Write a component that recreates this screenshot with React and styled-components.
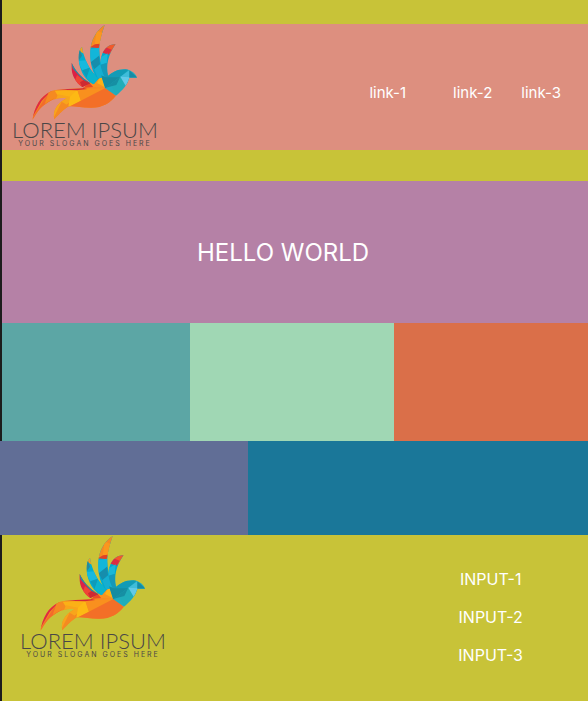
import React from "react";
import styled, { createGlobalStyle } from "styled-components";

const GlobalStyle = createGlobalStyle`
  *, *::before, *::after { box-sizing: border-box; }
  body {
    margin: 0;
    background: #c8c338;
    font-family: Inter, "Liberation Sans", sans-serif;
    color: #fff;
  }
`;

const Page = styled.div`
  display: flex;
  flex-direction: column;
  min-height: 100vh;
`;

const Edged = styled.div`
  border-left: 2px solid #1c1c1c;
  flex-grow: ${(p) => (p.$grow ? 1 : 0)};
`;

const Header = styled.header`
  display: flex;
  align-items: flex-start;
  justify-content: space-between;
  margin: 24px 0 31px;
  padding: 0 27px 0 8px;
  min-height: 126px;
  background: #dd8f7f;
`;

const Nav = styled.nav`
  display: flex;
  align-self: center;
  gap: 29px;
  padding-top: 12px;
`;

const NavLink = styled.a`
  color: #fff;
  font-size: 15px;
  line-height: 20px;
  text-decoration: none;

  &:first-child { margin-right: 18px; }
`;

const Hero = styled.section`
  display: flex;
  align-items: center;
  justify-content: center;
  height: 142px;
  padding: 2px 24px 0 0;
  background: #b581a6;
`;

const Title = styled.h1`
  margin: 0;
  font-size: 24px;
  font-weight: 400;
  line-height: 32px;
`;

const Tiles = styled.section`
  display: grid;
  grid-template-columns: ${(p) => p.$columns};
  height: ${(p) => p.$height};
`;

const Tile = styled.div`
  background: ${(p) => p.$color};
`;

const Footer = styled.footer`
  display: flex;
  align-items: flex-start;
  justify-content: space-between;
  padding: 0 65px 0 16px;
`;

const FooterList = styled.ul`
  display: flex;
  flex-direction: column;
  align-items: center;
  gap: 18px;
  margin: 0;
  padding: 34px 0 0;
  list-style: none;
  font-size: 16px;
  line-height: 20px;
`;

const LogoBox = styled.div`
  display: flex;
  flex-direction: column;
  align-items: center;
  width: 150px;
  color: #4a4747;
  white-space: nowrap;
`;

const BirdArt = styled.svg`
  display: block;
  width: 150px;
  height: 98px;
`;

const LogoName = styled.div`
  font-family: Lato, Inter, sans-serif;
  font-size: 22px;
  font-weight: 300;
  line-height: 16px;
`;

const LogoSlogan = styled.div`
  margin-top: 2px;
  font-family: Inter, "Liberation Sans", sans-serif;
  font-size: 7px;
  letter-spacing: 2px;
  line-height: 8px;
`;

const body =
  "M97 316C103 275 122 243 151 230C165 223 190 223 248 220L268 203L303 181L318 218L348 242C331 264 305 279 272 278C242 277 222 272 208 274C190 282 177 298 163 313C157 291 170 264 200 250C178 247 155 254 141 264C120 276 108 297 97 316Z";
const feather1 = "M215 143C224 166 244 187 271 205L247 216C224 200 211 175 215 143Z";
const feather2 = "M246 95C233 107 233 140 243 164C250 184 264 200 281 208L297 190C272 171 258 142 249 112Z";
const feather3 = "M314 30C288 47 271 77 271 112C270 148 278 176 294 191L319 184C304 158 297 126 298 96C300 72 306 54 314 30Z";
const feather4 = "M347 87C321 88 306 108 302 134C300 151 306 171 316 189L324 182C318 153 323 121 347 87Z";
const head =
  "M303 181L318 187C337 172 355 161 377 163C397 166 408 178 411 188L388 188C384 207 367 226 348 242L315 219Z";

function Bird({ id }) {
  const clip = (name) => `url(#${id}-${name})`;
  return (
    <BirdArt viewBox="30 27 450 294" aria-hidden="true">
      <defs>
        <clipPath id={`${id}-body`}><path d={body} /></clipPath>
        <clipPath id={`${id}-f1`}><path d={feather1} /></clipPath>
        <clipPath id={`${id}-f2`}><path d={feather2} /></clipPath>
        <clipPath id={`${id}-f3`}><path d={feather3} /></clipPath>
        <clipPath id={`${id}-f4`}><path d={feather4} /></clipPath>
        <clipPath id={`${id}-head`}><path d={head} /></clipPath>
      </defs>
      <g clipPath={clip("body")}>
        <path d="M90 170H360V320H90Z" fill="#f58a21" />
        <path d="M90 320L150 225L174 238L120 290Z" fill="#f36b2b" />
        <path d="M90 320L100 250L153 227L125 258Z" fill="#df2b43" />
        <path d="M147 229L190 224L168 247L134 267Z" fill="#f58a21" />
        <path d="M164 227L232 224L222 250L180 252Z" fill="#fbb116" />
        <path d="M174 238L225 248L195 273L155 318L158 275Z" fill="#f8a51b" />
        <path d="M185 260L208 274L155 320Z" fill="#f58a21" />
        <path d="M232 224L243 258L205 276L210 245Z" fill="#fdb914" />
        <path d="M232 224L318 218L243 258Z" fill="#f9901e" />
        <path d="M206 276L318 218L348 242L315 285L240 282Z" fill="#f36f27" />
        <path d="M168 224L250 219L262 222L230 226Z" fill="#d52b36" />
        <path d="M246 219L269 203L280 216Z" fill="#ec4b25" />
        <path d="M269 203L303 181L318 218L280 216Z" fill="#f7931e" />
        <path d="M303 181L318 218L291 204Z" fill="#fcb116" />
      </g>
      <g clipPath={clip("f1")}>
        <path d="M205 135H280V220H205Z" fill="#dc2145" />
        <path d="M212 140L225 150L276 207L260 207L219 161Z" fill="#1696ad" />
        <path d="M231 180L258 202L244 216L224 198Z" fill="#f04434" />
        <path d="M240 202L251 195L272 205L247 218Z" fill="#cf2a32" />
      </g>
      <g clipPath={clip("f2")}>
        <path d="M230 90H300V210H230Z" fill="#00aed0" />
        <path d="M235 90H253L254 118L238 108Z" fill="#f7a11c" />
        <path d="M232 108L240 104L246 122L235 138Z" fill="#27899c" />
        <path d="M232 138L258 136L270 158L247 166Z" fill="#18b9dd" />
        <path d="M247 166L270 158L260 188Z" fill="#0e9bb9" />
        <path d="M270 160L298 190L281 210L260 188Z" fill="#0bb3cd" />
      </g>
      <g clipPath={clip("f3")}>
        <path d="M268 28H322V192H268Z" fill="#00abd0" />
        <path d="M268 28H318L302 90L284 92L270 99Z" fill="#f58a21" />
        <path d="M290 46L309 55L299 90L284 89Z" fill="#fa971e" />
        <path d="M285 88L299 86L297 100L270 97Z" fill="#df4128" />
        <path d="M268 102L298 98L298 126L272 147Z" fill="#12b6d9" />
        <path d="M272 142L297 122L300 148L283 163Z" fill="#168dac" />
        <path d="M283 163L301 148L319 184L294 191Z" fill="#16aed0" />
      </g>
      <g clipPath={clip("f4")}>
        <path d="M298 85H350V190H298Z" fill="#00a9cc" />
        <path d="M312 85H350L330 116L311 106Z" fill="#f15a2a" />
        <path d="M304 112L317 97L335 104L326 119Z" fill="#dc2d42" />
        <path d="M300 128L323 115L320 144L300 150Z" fill="#1ab7d7" />
        <path d="M300 150L320 144L324 184L314 189Z" fill="#1598b8" />
      </g>
      <g clipPath={clip("head")}>
        <path d="M300 160H412V245H300Z" fill="#21adbf" />
        <path d="M303 181L361 185L315 220Z" fill="#158ca1" />
        <path d="M318 187L345 165L388 162L361 187Z" fill="#129bb6" />
        <path d="M361 185L389 165L388 190L360 215Z" fill="#3fbcda" />
        <path d="M361 185L385 205L348 242L335 211Z" fill="#20adb9" />
        <path d="M361 185L389 187L378 214Z" fill="#62c9e8" />
        <path d="M315 219L361 185L349 210Z" fill="#168fa3" />
        <path d="M388 166L412 188L388 188Z" fill="#168ba5" />
      </g>
    </BirdArt>
  );
}

function Logo({ id }) {
  return (
    <LogoBox>
      <Bird id={id} />
      <LogoName>LOREM IPSUM</LogoName>
      <LogoSlogan>YOUR SLOGAN GOES HERE</LogoSlogan>
    </LogoBox>
  );
}

export default function App() {
  return (
    <Page>
      <GlobalStyle />
      <Edged>
        <Header>
          <Logo id="top" />
          <Nav>
            <NavLink href="#link-1">link-1</NavLink>
            <NavLink href="#link-2">link-2</NavLink>
            <NavLink href="#link-3">link-3</NavLink>
          </Nav>
        </Header>
        <Hero>
          <Title>HELLO WORLD</Title>
        </Hero>
        <Tiles $columns="188fr 204fr 194fr" $height="118px">
          <Tile $color="#5ca6a5" />
          <Tile $color="#a0d7b4" />
          <Tile $color="#da6f49" />
        </Tiles>
      </Edged>
      <Tiles $columns="248fr 340fr" $height="94px">
        <Tile $color="#616e96" />
        <Tile $color="#1a7799" />
      </Tiles>
      <Edged $grow>
        <Footer>
          <Logo id="bottom" />
          <FooterList>
            <li>INPUT-1</li>
            <li>INPUT-2</li>
            <li>INPUT-3</li>
          </FooterList>
        </Footer>
      </Edged>
    </Page>
  );
}
